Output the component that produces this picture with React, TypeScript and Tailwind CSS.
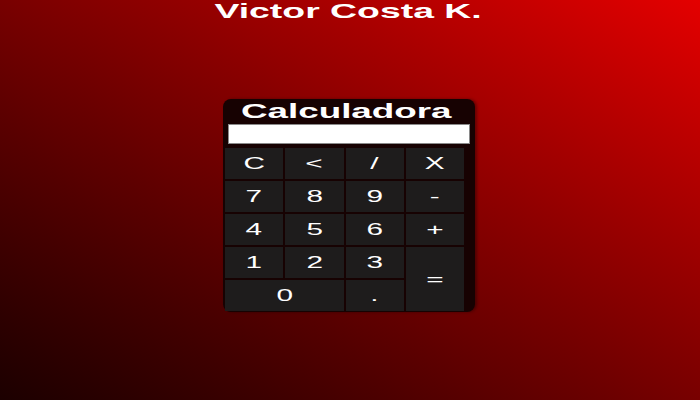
import { ReactNode } from "react";

// text in the reference is drawn wide, so each label is stretched sideways
function Wide({ children, k = "scale-x-[1.75]" }: { children: ReactNode; k?: string }) {
  return <span className={`inline-block ${k}`}>{children}</span>;
}

const Keys: { label: string; span?: string }[] = [
  { label: "C" },
  { label: "<" },
  { label: "/" },
  { label: "X" },
  { label: "7" },
  { label: "8" },
  { label: "9" },
  { label: "-" },
  { label: "4" },
  { label: "5" },
  { label: "6" },
  { label: "+" },
  { label: "1" },
  { label: "2" },
  { label: "3" },
  { label: "=", span: "row-span-2" },
  { label: "0", span: "col-span-2" },
  { label: "." },
];

export default function App() {
  return (
    <div className="w-full h-[400px] bg-linear-to-tr from-[#1c0000] to-[#e40000] flex flex-col items-center overflow-hidden font-['Liberation_Sans',Arial,sans-serif]">
      <h1 className="text-[21px] leading-none font-bold text-white text-center ml-[-3px]">
        <Wide k="scale-x-[1.78]">Victor Costa K.</Wide>
      </h1>

      <div className="mt-[78px] ml-[-2px] w-[252px] h-[213px] bg-[#170202] rounded-[8px] pl-[2px] flex flex-col shadow-[2px_0_3px_rgba(0,0,0,0.35)]">
        <div className="text-[20px] leading-none font-bold text-white text-center pr-[8px] pt-[2px]">
          <Wide k="scale-x-[1.84]">Calculadora</Wide>
        </div>
        <input
          className="mt-[3px] ml-[3px] w-[242px] h-[20px] bg-white border border-[#8a8a8a] outline-none"
          readOnly
        />
        <div className="mt-[4px] w-[239px] grid grid-cols-4 grid-rows-[repeat(5,31px)] gap-[2px]">
          {Keys.map((key) => (
            <button
              key={key.label}
              className={`bg-[#1e1c1c] text-white text-[17px] leading-none flex items-center justify-center ${key.span ?? ""}`}
            >
              <Wide>{key.label}</Wide>
            </button>
          ))}
        </div>
      </div>
    </div>
  );
}
